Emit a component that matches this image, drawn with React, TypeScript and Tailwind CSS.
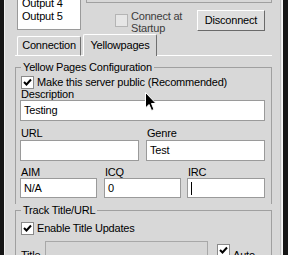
import React from "react";

function Check({ checked, disabled }: { checked?: boolean; disabled?: boolean }) {
  return (
    <div
      className={`w-[13px] h-[13px] border flex items-center justify-center shrink-0 ${
        disabled ? "border-[#b4b4b4] bg-[#e6e6e6]" : "border-[#8a8a8a] bg-white"
      }`}
    >
      {checked && (
        <svg width="11" height="11" viewBox="0 0 11 11">
          <path d="M2 5 L4.5 7.5 L9 2.5" fill="none" stroke="#000" strokeWidth="2" />
        </svg>
      )}
    </div>
  );
}

function Field({ className, children }: { className?: string; children?: React.ReactNode }) {
  return (
    <div className={`border border-[#9a9a9a] bg-white flex items-center pl-[3px] ${className ?? ""}`}>{children}</div>
  );
}

export default function App() {
  return (
    <div className="relative w-[288px] h-[255px] overflow-hidden bg-[#161616] flex text-[11px] leading-[13px] tracking-[-0.2px] whitespace-nowrap text-black font-['Liberation_Sans',Arial,sans-serif]">
      <div className="ml-[4px] w-[279px] h-full bg-[#d8d8d8] border-l border-[#f0f0f0] flex">
        <div className="ml-[10px] w-[257px] flex flex-col">
          {/* top: output list, startup checkbox, disconnect */}
          <div className="h-[35px] flex items-start">
            <div className="ml-[2px] w-[64px] h-[30px] bg-white border-x border-b border-[#9a9a9a] overflow-hidden pl-[4px]">
              <div className="-mt-[3px]">
                Output 4
                <br />
                Output 5
              </div>
            </div>
            <div className="ml-[5px] flex-1 flex flex-col">
              <div className="h-[3px] border-x border-b border-[#a0a0a0]" />
              <div className="flex items-start">
                <div className="ml-[29px] mt-[11px]">
                  <Check disabled />
                </div>
                <div className="ml-[3px] mt-[7px] leading-[12px] text-[#3c3c3c]">
                  Connect at
                  <br />
                  Startup
                </div>
                <button className="ml-auto mr-[7px] mt-[7px] w-[68px] h-[21px] bg-[#dedede] border border-t-white border-l-white border-r-[#6a6a6a] border-b-[#6a6a6a] flex items-center justify-center">
                  Disconnect
                </button>
              </div>
            </div>
          </div>

          {/* tabs */}
          <div className="h-[22px] flex items-end">
            <div className="w-[2px] h-px bg-white" />
            <div className="w-[64px] h-[20px] border border-t-white border-l-white border-r-[#707070] border-b-white rounded-t-[2px] text-center pt-[2px]">
              Connection
            </div>
            <div className="w-[2px] h-px bg-white" />
            <div className="w-[74px] h-[22px] border-t border-l border-r border-t-white border-l-white border-r-[#707070] rounded-t-[2px] text-center pt-[4px]">
              Yellowpages
            </div>
            <div className="flex-1 h-px bg-white" />
          </div>

          {/* yellow pages group */}
          <fieldset className="mt-[5px] border border-b-0 border-[#a0a0a0]">
            <legend className="ml-[5px] px-[2px]">Yellow Pages Configuration</legend>
            <div className="pl-[4px] pr-[5px] pb-[6px]">
              <div className="flex items-start mt-[1px]">
                <div className="mt-[1px] ml-[1px]">
                  <Check checked />
                </div>
                <span className="ml-[3px] mt-[1px]">Make this server public (Recommended)</span>
              </div>
              <div className="leading-[11px] pl-[1px]">Description</div>
              <Field className="w-[245px] h-[21px]">Testing</Field>
              <div className="flex mt-[7px] gap-[7px]">
                <div className="w-[119px]">
                  <div className="leading-[11px] pl-[1px] mb-[1px]">URL</div>
                  <Field className="h-[21px]" />
                </div>
                <div className="w-[119px]">
                  <div className="leading-[11px] pl-[1px] mb-[1px]">Genre</div>
                  <Field className="h-[21px]">Test</Field>
                </div>
              </div>
              <div className="flex mt-[6px]">
                <div className="w-[77px]">
                  <div className="leading-[11px] pl-[1px]">AIM</div>
                  <Field className="h-[20px]">N/A</Field>
                </div>
                <div className="w-[77px] ml-[7px]">
                  <div className="leading-[11px] pl-[1px]">ICQ</div>
                  <Field className="h-[20px]">0</Field>
                </div>
                <div className="w-[78px] ml-[6px]">
                  <div className="leading-[11px] pl-[1px]">IRC</div>
                  <Field className="h-[20px]">
                    <span className="w-px h-[13px] bg-black" />
                  </Field>
                </div>
              </div>
            </div>
          </fieldset>

          {/* track title group */}
          <fieldset className="border border-[#a0a0a0] flex-1">
            <legend className="ml-[5px] px-[2px]">Track Title/URL</legend>
            <div className="pl-[4px]">
              <div className="flex items-start mt-[4px]">
                <div className="mt-[1px] ml-[1px]">
                  <Check checked />
                </div>
                <span className="ml-[3px] mt-[1px]">Enable Title Updates</span>
              </div>
              <div className="flex items-start mt-[6px]">
                <div className="w-[25px] pl-[1px] mt-[8px]">Title</div>
                <div className="w-[163px] h-[21px] border border-[#a8a8a8] bg-[#d6d6d6]" />
                <div className="ml-[9px] mt-[3px]">
                  <Check checked />
                </div>
                <span className="ml-[3px] mt-[8px]">Auto</span>
              </div>
            </div>
          </fieldset>
        </div>
        <div className="ml-auto w-px h-full bg-[#c2c2c2]" />
        <div className="w-px h-full bg-[#eaeaea]" />
        <div className="w-px h-full bg-[#f6f6f6]" />
      </div>

      {/* mouse pointer */}
      <svg className="absolute left-[145px] top-[92px]" width="12" height="20" viewBox="0 0 12 20">
        <polygon
          points="0.5,0.5 0.5,16 4,12.5 6.5,18.5 9,17.5 6.5,11.5 11,11.5"
          fill="#000"
          stroke="#fff"
          strokeWidth="1"
        />
      </svg>
    </div>
  );
}
